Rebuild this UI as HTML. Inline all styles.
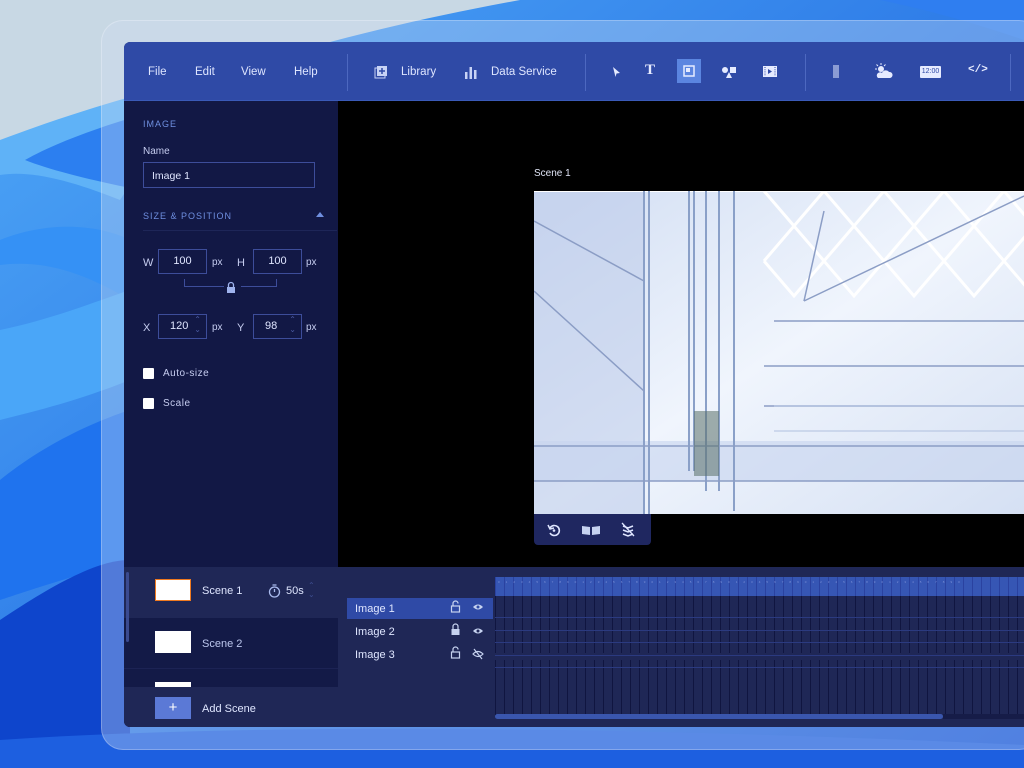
<!DOCTYPE html>
<html><head><meta charset="utf-8"><style>
*{margin:0;padding:0;box-sizing:border-box}
body{width:1024px;height:768px;overflow:hidden;position:relative;font-family:"Liberation Sans",sans-serif;background:#c9d9e6}
.abs{position:absolute}
.t{color:#dfe6ff;font-size:11px}
.lbl{color:#c6cdf0;font-size:10px}
.box{position:absolute;border:1px solid #3d4d9a;color:#e0e6ff;font-size:11px;text-align:center}
.sec{color:#6f8fe0;font-size:9px;letter-spacing:1px}
.cb{position:absolute;width:11px;height:11px;background:#fff;border-radius:1px}
.sep{position:absolute;top:52px;width:1px;height:37px;background:#4d68c0}
</style></head><body>
<svg class="abs" style="left:0;top:0" width="1024" height="768">
<defs>
<linearGradient id="g1" x1="0" y1="0" x2="1" y2="1"><stop offset="0" stop-color="#4fa8f7"/><stop offset="1" stop-color="#0d4fd8"/></linearGradient>
</defs>
<rect width="1024" height="768" fill="#c8d8e4"/>
<path d="M0 170 C120 100 300 40 520 0 L1024 0 L1024 768 L0 768 Z" fill="url(#g1)"/>
<path d="M0 140 C80 110 150 90 200 80 L120 200 C70 180 30 170 0 175Z" fill="#5fb2f7"/>
<path d="M25 160 C60 140 120 120 160 110 L140 190 C90 180 50 170 25 160Z" fill="#2c7ff0"/>
<path d="M0 240 C50 220 100 225 130 240 L130 300 C80 270 40 260 0 265Z" fill="#3591f5"/>
<path d="M0 330 C50 320 100 300 130 290 L130 380 C80 400 40 410 0 420Z" fill="#4aa6f8"/>
<path d="M0 480 C50 440 100 420 130 410 L130 560 C60 580 30 590 0 600Z" fill="#1f73ee"/>
<path d="M0 620 C60 580 100 560 130 560 L130 768 L0 768Z" fill="#0e45cc"/>
<path d="M0 740 C300 720 700 730 1024 745 L1024 768 L0 768Z" fill="#1d5fe0"/>
<path d="M880 0 C930 10 980 25 1024 40 L1024 0Z" fill="#2f7ef0"/>
</svg>
<div class="abs" style="left:101px;top:20px;width:940px;height:730px;border-radius:22px;background:rgba(205,220,240,.35);border:1px solid rgba(255,255,255,.25)"></div>
<div class="abs" style="left:124px;top:42px;width:900px;height:685px;background:#121845;border-radius:6px 0 0 6px;overflow:hidden">
 <div class="abs" style="left:0;top:0;width:900px;height:59px;background:#2f4aa6;border-bottom:1px solid #3a5ab8"></div>
 <div class="abs t" style="left:24px;top:24px;font-size:11.5px">File</div>
 <div class="abs t" style="left:71px;top:24px;font-size:11.5px">Edit</div>
 <div class="abs t" style="left:117px;top:24px;font-size:11.5px">View</div>
 <div class="abs t" style="left:170px;top:24px;font-size:11.5px">Help</div>
 <div class="sep" style="left:223px;top:12px"></div>
 <svg class="abs" style="left:250px;top:23px" width="14" height="14"><rect x="3" y="1" width="10" height="10" fill="#c8d3f5"/><rect x="1" y="3" width="10" height="10" fill="none" stroke="#c8d3f5"/><path d="M8 3v6M5 6h6" stroke="#2f4aa6" stroke-width="1.5"/></svg>
 <div class="abs t" style="left:277px;top:24px;font-size:11.5px">Library</div>
 <svg class="abs" style="left:340px;top:23px" width="14" height="14"><rect x="1" y="7" width="2.5" height="7" fill="#c8d3f5"/><rect x="5.5" y="2" width="2.5" height="12" fill="#c8d3f5"/><rect x="10" y="5" width="2.5" height="9" fill="#c8d3f5"/></svg>
 <div class="abs t" style="left:367px;top:24px;font-size:11.5px">Data Service</div>
 <div class="sep" style="left:461px;top:12px"></div>
 <svg class="abs" style="left:486px;top:24px" width="12" height="12"><path d="M3 1l7 6-3.5 0.5-1 3.5z" fill="#e6ebff"/></svg>
 <div class="abs" style="left:521px;top:20px;color:#e6ebff;font:bold 15px 'Liberation Serif',serif">T</div>
 <div class="abs" style="left:553px;top:17px;width:24px;height:24px;background:#5b85e0"></div>
 <svg class="abs" style="left:559px;top:23px" width="12" height="12"><rect x="1" y="1" width="10" height="10" fill="none" stroke="#e6ebff" stroke-width="1.5"/><rect x="3" y="3" width="4" height="4" fill="#e6ebff"/></svg>
 <svg class="abs" style="left:597px;top:23px" width="16" height="14"><circle cx="4" cy="5" r="3" fill="#e6ebff"/><rect x="9" y="2" width="6" height="6" fill="#e6ebff"/><path d="M8 7l3 6h-6z" fill="#e6ebff"/></svg>
 <svg class="abs" style="left:638px;top:23px" width="16" height="13"><rect x="1" y="1" width="14" height="11" fill="#e6ebff"/><path d="M6 4l4 2.5-4 2.5z" fill="#2f4aa6"/><path d="M3 2v9M13 2v9" stroke="#2f4aa6" stroke-dasharray="1 1.2"/></svg>
 <div class="sep" style="left:681px;top:12px"></div>
 <div class="abs" style="left:709px;top:23px;width:6px;height:13px;background:#8b9cd4"></div>
 <svg class="abs" style="left:749px;top:21px" width="20" height="16"><circle cx="8" cy="6" r="3" fill="#e6ebff"/><path d="M8 0v2M2 6h2M3.5 1.5l1.5 1.5M12.5 1.5l-1.5 1.5" stroke="#e6ebff"/><path d="M5 15h12a3 3 0 0 0-1-6 4 4 0 0 0-7 1 3 3 0 0 0-4 5z" fill="#e6ebff"/></svg>
 <div class="abs" style="left:796px;top:24px;width:21px;height:12px;background:#e6ebff;border-radius:1px;color:#2f4aa6;font-size:7px;text-align:center;line-height:12px">12:00</div>
 <div class="abs" style="left:844px;top:22px;color:#e6ebff;font:bold 11px 'Liberation Mono',monospace">&lt;/&gt;</div>
 <div class="sep" style="left:886px;top:12px"></div>
 <div class="abs sec" style="left:19px;top:77px">IMAGE</div>
 <div class="abs lbl" style="left:19px;top:104px">Name</div>
 <div class="box" style="left:19px;top:120px;width:172px;height:26px;text-align:left;padding:7px 8px;font-size:10.5px">Image 1</div>
 <div class="abs sec" style="left:19px;top:169px">SIZE &amp; POSITION</div>
 <svg class="abs" style="left:191px;top:169px" width="10" height="8"><path d="M1 6l4-5 4 5z" fill="#6f8fe0"/></svg>
 <div class="abs" style="left:19px;top:188px;width:194px;height:1px;background:#1e2658"></div>
 <div class="abs lbl" style="left:19px;top:215px;font-size:11px">W</div>
 <div class="box" style="left:34px;top:207px;width:49px;height:25px;line-height:23px">100</div>
 <div class="abs lbl" style="left:88px;top:215px">px</div>
 <div class="abs lbl" style="left:113px;top:215px;font-size:11px">H</div>
 <div class="box" style="left:129px;top:207px;width:49px;height:25px;line-height:23px">100</div>
 <div class="abs lbl" style="left:182px;top:215px">px</div>
 <div class="abs" style="left:60px;top:237px;width:40px;height:8px;border:1px solid #3d4d9a;border-top:none;border-right:none"></div>
 <div class="abs" style="left:117px;top:237px;width:36px;height:8px;border:1px solid #3d4d9a;border-top:none;border-left:none"></div>
 <svg class="abs" style="left:102px;top:239px" width="10" height="13"><path d="M2.5 6V4a2.5 2.5 0 0 1 5 0v2" fill="none" stroke="#9fb3ee" stroke-width="1.3"/><rect x="1" y="6" width="8" height="6" fill="#9fb3ee"/></svg>
 <div class="abs lbl" style="left:19px;top:280px;font-size:11px">X</div>
 <div class="box" style="left:34px;top:272px;width:49px;height:25px;line-height:23px;text-align:left;padding-left:11px">120<span style="position:absolute;right:5px;top:0;color:#4a5aa0;font-size:8px;line-height:10px">⌃<br>⌄</span></div>
 <div class="abs lbl" style="left:88px;top:280px">px</div>
 <div class="abs lbl" style="left:113px;top:280px;font-size:11px">Y</div>
 <div class="box" style="left:129px;top:272px;width:49px;height:25px;line-height:23px;text-align:left;padding-left:11px">98<span style="position:absolute;right:5px;top:0;color:#4a5aa0;font-size:8px;line-height:10px">⌃<br>⌄</span></div>
 <div class="abs lbl" style="left:182px;top:280px">px</div>
 <div class="cb" style="left:19px;top:326px"></div>
 <div class="abs lbl" style="left:39px;top:326px;letter-spacing:.5px">Auto-size</div>
 <div class="cb" style="left:19px;top:356px"></div>
 <div class="abs lbl" style="left:39px;top:356px;letter-spacing:.5px">Scale</div>
 <div class="abs" style="left:214px;top:59px;width:686px;height:466px;background:#000"></div>
 <div class="abs" style="left:410px;top:126px;color:#dfe4f5;font-size:10px">Scene 1</div>
 <svg class="abs" style="left:410px;top:149px" width="490" height="323">
  <defs><linearGradient id="im" x1="0" y1="0" x2="1" y2="1"><stop offset="0" stop-color="#d2def3"/><stop offset=".5" stop-color="#f0f5fd"/><stop offset="1" stop-color="#d5e0f3"/></linearGradient></defs>
  <rect width="490" height="323" fill="url(#im)"/>
  <rect x="0" y="0" width="110" height="323" fill="#bccbe9" opacity=".55"/>
  <rect x="0" y="250" width="490" height="40" fill="#c6d4ee" opacity=".6"/>
  <path d="M230 0l30 35 30-35 30 35 30-35 30 35 30-35 30 35 30-35 30 35 30-35 30 35M230 70l30-35 30 35 30-35 30 35 30-35 30 35 30-35 30 35 30-35 30 35 30-35M230 70l30 35 30-35 30 35 30-35 30 35 30-35 30 35 30-35 30 35 30-35 30 35" stroke="#fff" stroke-width="3" fill="none"/>
  <path d="M230 0l30 35M0 0h490" stroke="#fff" stroke-width="2"/>
  <path d="M110 0v323M115 0v323M155 0v280M160 0v280M172 0v300M185 0v300M200 0v320" stroke="#8aa0c8" stroke-width="2"/>
  <path d="M0 30l110 60M0 100l110 100M270 110L490 5M290 20L270 110M0 290h490M0 255h490M230 215h260M230 175h260M240 130h250" stroke="#8b9dc5" stroke-width="1.5"/>
  <path d="M240 215h250M240 240h250" stroke="#b0c0df" fill="none"/>
  <rect x="160" y="220" width="25" height="65" fill="#5a6f68" opacity=".55"/>
 </svg>
 <div class="abs" style="left:410px;top:472px;width:117px;height:31px;background:#1f2760;border-radius:0 0 4px 4px"></div>
 <svg class="abs" style="left:423px;top:481px" width="14" height="14"><path d="M3 5a5 5 0 1 1 0 5" fill="none" stroke="#dfe6ff" stroke-width="1.6"/><path d="M1 2l2 4 4-1" fill="none" stroke="#dfe6ff" stroke-width="1.5"/><circle cx="7" cy="7.5" r="1.3" fill="#dfe6ff"/></svg>
 <svg class="abs" style="left:457px;top:482px" width="20" height="12"><path d="M1 2l8 1v8l-8-1z" fill="#c6d2f0"/><path d="M11 3l8-1v8l-8 1z" fill="#c6d2f0"/></svg>
 <svg class="abs" style="left:497px;top:480px" width="14" height="15"><path d="M2 4l5 2 5-2M2 8l5 2 5-2M2 12l5 2 5-2" stroke="#dfe6ff" stroke-width="1.5" fill="none"/><path d="M1 1l12 13" stroke="#dfe6ff" stroke-width="1.3"/></svg>
 <div class="abs" style="left:0;top:525px;width:900px;height:160px;background:#1f2756"></div>
 <div class="abs" style="left:0;top:576px;width:214px;height:69px;background:#131a47"></div>
 <div class="abs" style="left:0;top:626px;width:214px;height:1px;background:#1c2354"></div>
 <div class="abs" style="left:2px;top:530px;width:3px;height:70px;background:#3a4a90;border-radius:2px"></div>
 <div class="abs" style="left:31px;top:537px;width:36px;height:22px;background:#fff;border:1.5px solid #f07a20"></div>
 <div class="abs t" style="left:78px;top:543px">Scene 1</div>
 <svg class="abs" style="left:144px;top:542px" width="13" height="14"><circle cx="6.5" cy="8" r="5" fill="none" stroke="#aabbee" stroke-width="1.3"/><path d="M4.5 1h4M6.5 8V5" stroke="#aabbee" stroke-width="1.3"/></svg>
 <div class="abs t" style="left:162px;top:543px">50s</div>
 <div class="abs" style="left:184px;top:539px;color:#3d4d8f;font-size:8px;line-height:9px">⌃<br>⌄</div>
 <div class="abs" style="left:31px;top:589px;width:36px;height:22px;background:#fff"></div>
 <div class="abs t" style="left:78px;top:596px;color:#bcc7ee">Scene 2</div>
 <div class="abs" style="left:31px;top:640px;width:36px;height:5px;background:#fff"></div>
 <div class="abs" style="left:0;top:645px;width:214px;height:40px;background:#1f2756"></div>
 <div class="abs" style="left:31px;top:655px;width:36px;height:22px;background:#5b79d6;color:#fff;text-align:center;font-size:15px;line-height:21px">+</div>
 <div class="abs t" style="left:78px;top:661px">Add Scene</div>
 <div class="abs" style="left:223px;top:556px;width:146px;height:21px;background:#2f4aa6"></div>
 <div class="abs t" style="left:231px;top:561px">Image 1</div>
 <div class="abs t" style="left:231px;top:584px">Image 2</div>
 <div class="abs t" style="left:231px;top:607px">Image 3</div>
 <svg class="abs" style="left:326px;top:558px" width="12" height="70">
  <path d="M3 6V3.5a2.5 2.5 0 0 1 5 0" fill="none" stroke="#c6d2f0" stroke-width="1.2"/><rect x="1.5" y="6" width="8" height="6" fill="none" stroke="#c6d2f0" stroke-width="1.2"/>
  <path d="M3 29V26.5a2.5 2.5 0 0 1 5 0V29" fill="none" stroke="#c6d2f0" stroke-width="1.2"/><rect x="1.5" y="29" width="8" height="6" fill="#c6d2f0"/>
  <path d="M3 52V49.5a2.5 2.5 0 0 1 5 0" fill="none" stroke="#c6d2f0" stroke-width="1.2"/><rect x="1.5" y="52" width="8" height="6" fill="none" stroke="#c6d2f0" stroke-width="1.2"/>
 </svg>
 <svg class="abs" style="left:348px;top:560px" width="12" height="60">
  <path d="M1 5q5-5 10 0q-5 5-10 0z" fill="#c6d2f0"/><circle cx="6" cy="5" r="1.5" fill="#2f4aa6"/>
  <path d="M1 29q5-5 10 0q-5 5-10 0z" fill="#c6d2f0"/><circle cx="6" cy="29" r="1.5" fill="#1f2756"/>
  <path d="M1 52q5-5 10 0q-5 5-10 0z" fill="none" stroke="#c6d2f0" stroke-width="1.2"/><path d="M2 47l8 10" stroke="#c6d2f0" stroke-width="1.2"/>
 </svg>
 <div class="abs" style="left:371px;top:535px;width:529px;height:150px;background:repeating-linear-gradient(90deg,#101540 0 1px,#1f2756 1px 9px)"></div>
 <div class="abs" style="left:371px;top:535px;width:529px;height:19px;background:repeating-linear-gradient(90deg,#2a42a0 0 1px,#3656b4 1px 9px)"></div>
 <div class="abs" style="left:371px;top:538px;width:529px;height:6px;font-size:3px;color:#7f93d8;letter-spacing:6px;white-space:nowrap;overflow:hidden;padding-left:3px">0123456789012345678901234567890123456789012345678901234567890</div>
 <div class="abs" style="left:371px;top:575px;width:529px;height:1px;background:#2b3a80"></div>
 <div class="abs" style="left:371px;top:588px;width:529px;height:1px;background:#2b3a80"></div>
 <div class="abs" style="left:371px;top:600px;width:529px;height:1px;background:#2b3a80"></div>
 <div class="abs" style="left:371px;top:611px;width:529px;height:7px;background:#1f2756"></div>
 <div class="abs" style="left:371px;top:613px;width:529px;height:1px;background:#2b3a80"></div>
 <div class="abs" style="left:371px;top:625px;width:529px;height:1px;background:#2b3a80"></div>
 <div class="abs" style="left:371px;top:673px;width:529px;height:12px;background:#1f2756"></div>
 <div class="abs" style="left:371px;top:672px;width:448px;height:5px;background:#3a56ad;border-radius:3px"></div>
 <div class="abs" style="left:819px;top:672px;width:81px;height:5px;background:#161c48"></div>
</div>
</body></html>
